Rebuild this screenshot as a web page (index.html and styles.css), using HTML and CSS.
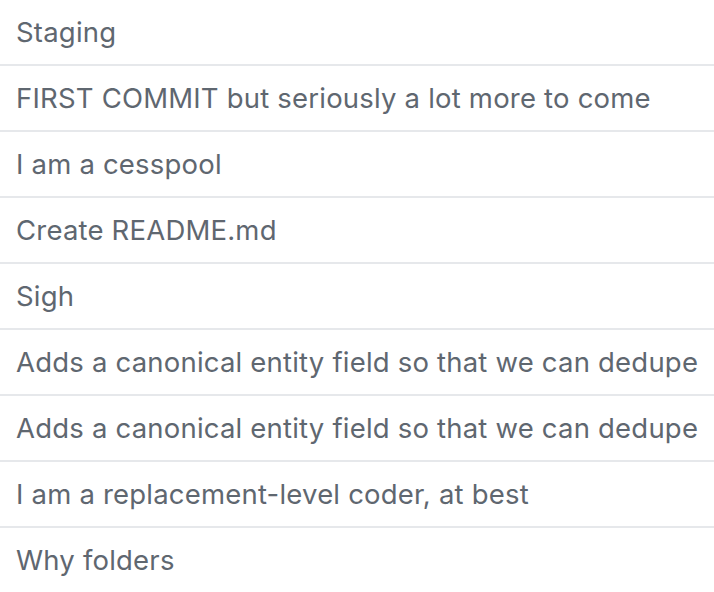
FILE: index.html
```html
<!DOCTYPE html>
<html>
<head>
<meta charset="utf-8">
<link rel="stylesheet" href="styles.css">
</head>
<body>
<ul class="list">
  <li class="row">Staging</li>
  <li class="row">FIRST COMMIT but seriously a lot more to come</li>
  <li class="row">I am a cesspool</li>
  <li class="row">Create README.md</li>
  <li class="row">Sigh</li>
  <li class="row">Adds a canonical entity field so that we can dedupe</li>
  <li class="row">Adds a canonical entity field so that we can dedupe</li>
  <li class="row">I am a replacement-level coder, at best</li>
  <li class="row">Why folders</li>
</ul>
</body>
</html>
```
FILE: styles.css
```css
html, body {
  margin: 0;
  padding: 0;
  background: #ffffff;
}
.list {
  list-style: none;
  margin: 0;
  padding: 0;
  font-family: "Inter", "Liberation Sans", Arial, sans-serif;
  font-size: 27.5px;
  letter-spacing: 0.2px;
  color: #5f6770;
}
.row {
  height: 64px;
  box-sizing: content-box;
  padding: 0 0 0 16px;
  display: flex;
  align-items: center;
  border-bottom: 2px solid #e6e8eb;
  white-space: nowrap;
}
```
